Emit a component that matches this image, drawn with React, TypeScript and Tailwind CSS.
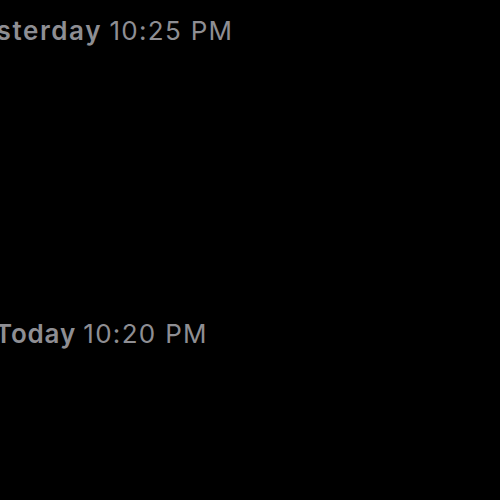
import React from "react";

export default function App() {
  return (
    <div className="w-[500px] h-[500px] bg-black overflow-hidden" style={{ fontFamily: "Inter, 'Noto Sans', sans-serif" }}>
      <div className="flex flex-col text-[26px] leading-none text-[#8e8e93]">
        <div className="mt-[18px] ml-[-38px] whitespace-nowrap">
          <span className="font-semibold tracking-[1.6px]">Yesterday</span>{" "}
          <span className="font-normal tracking-[1.3px]">10:25 PM</span>
        </div>
        <div className="mt-[277px] ml-[-5px] whitespace-nowrap">
          <span className="font-semibold tracking-[0.8px]">Today</span>{" "}
          <span className="font-normal tracking-[1.3px]">10:20 PM</span>
        </div>
      </div>
    </div>
  );
}
